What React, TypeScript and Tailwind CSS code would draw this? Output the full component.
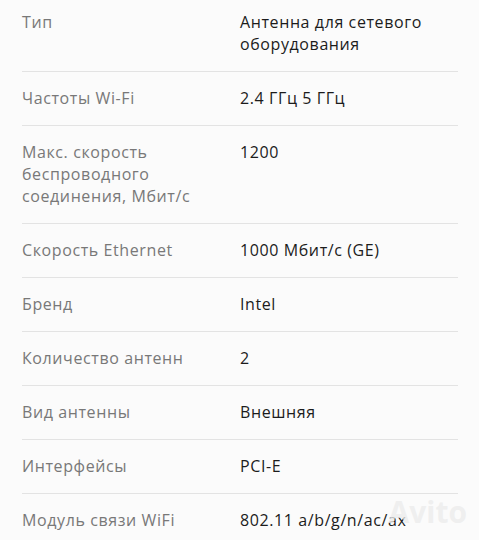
import React from 'react';

const specs: { label: string; value: string }[] = [
    { label: 'Тип', value: 'Антенна для сетевого оборудования' },
    { label: 'Частоты Wi-Fi', value: '2.4 ГГц 5 ГГц' },
    { label: 'Макс. скорость беспроводного соединения, Мбит/с', value: '1200' },
    { label: 'Скорость Ethernet', value: '1000 Мбит/с (GE)' },
    { label: 'Бренд', value: 'Intel' },
    { label: 'Количество антенн', value: '2' },
    { label: 'Вид антенны', value: 'Внешняя' },
    { label: 'Интерфейсы', value: 'PCI-E' },
    { label: 'Модуль связи WiFi', value: '802.11 a/b/g/n/ac/ax' },
];

const App = () => {
    return (
        <div
            className="relative w-[479px] h-[540px] overflow-hidden bg-[#fbfbfb] px-[22px]"
            style={{ fontFamily: '"Open Sans", "Noto Sans", sans-serif' }}
        >
            <div className="w-[436px] -mt-[4.5px]">
                {specs.map((s, i) => (
                    <div
                        key={s.label}
                        className={`flex py-[15.5px] text-[16px] leading-[22px] tracking-[0.6px] ${
                            i < specs.length - 1 ? 'border-b border-[#e3e3e3]' : ''
                        }`}
                    >
                        <div className="w-[218px] pr-4 text-[#787878]">{s.label}</div>
                        <div className="flex-1 text-[#1c1c1c]">{s.value}</div>
                    </div>
                ))}
            </div>
            <div className="absolute right-[12px] bottom-[6px] text-[30px] font-bold text-[#ececec]/80 select-none">
                Avito
            </div>
        </div>
    );
};

export default App;
